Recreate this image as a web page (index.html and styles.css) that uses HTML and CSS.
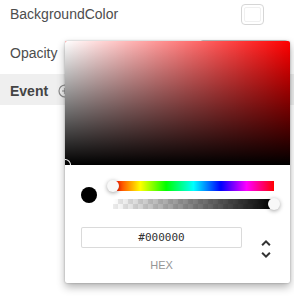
FILE: index.html
```html
<!DOCTYPE html>
<html>
<head>
<meta charset="utf-8">
<link rel="stylesheet" href="styles.css">
</head>
<body>
<div class="panel">
  <div class="row row-bg">
    <span class="label">BackgroundColor</span>
    <span class="swatch"><span class="swatch-inner"></span></span>
  </div>
  <div class="row row-op">
    <span class="label">Opacity</span>
    <span class="op-input"></span>
  </div>
  <div class="row row-event">
    <span class="label bold">Event</span>
    <svg class="add-icon" width="14" height="14" viewBox="0 0 14 14"><circle cx="7" cy="7" r="6" fill="none" stroke="#8a8a8a" stroke-width="1.2"/><path d="M4 7h6M7 4v6" stroke="#8a8a8a" stroke-width="1.2"/></svg>
  </div>

  <div class="picker">
    <div class="sat">
      <div class="sat-white"></div>
      <div class="sat-black"></div>
      <div class="sat-pointer"></div>
    </div>
    <div class="body">
      <div class="controls">
        <div class="color"><div class="dot"></div></div>
        <div class="toggles">
          <div class="hue"><div class="pointer pointer-hue"></div></div>
          <div class="alpha"><div class="alpha-grad"></div><div class="pointer pointer-alpha"></div></div>
        </div>
      </div>
      <div class="fields">
        <div class="field">
          <div class="hex-input">#000000</div>
          <div class="hex-label">HEX</div>
        </div>
        <div class="toggle">
          <svg class="toggle-icon" width="24" height="24" viewBox="0 0 24 24"><path fill="#333" d="M12,18.17L8.830,15L7.42,16.41L12,21L16.59,16.41L15.17,15M12,5.83L15.17,9L16.58,7.59L12,3L7.41,7.59L8.83,9L12,5.83Z"/></svg>
        </div>
      </div>
    </div>
  </div>
</div>
</body>
</html>
```
FILE: styles.css
```css
html, body { margin: 0; padding: 0; background: #fff; }
body { width: 294px; height: 301px; overflow: hidden; font-family: "Liberation Sans", Arial, sans-serif; }
.panel { position: relative; width: 294px; height: 301px; }
.row { display: flex; align-items: flex-start; padding-left: 10px; box-sizing: border-box; }
.label { font-size: 14px; line-height: 16px; color: #4d4d4d; }
.bold { font-weight: bold; color: #444; }
.row-bg { height: 33px; }
.row-bg .label { margin-top: 6px; }
.swatch { margin-left: auto; margin-right: 30px; margin-top: 4px; width: 23px; height: 21px; box-sizing: border-box; border: 1px solid #d6d6d6; border-radius: 4px; padding: 2px; }
.swatch-inner { display: block; width: 100%; height: 100%; box-sizing: border-box; border: 1px solid #f0f0f0; border-radius: 2px; }
.row-op { height: 41px; }
.row-op .label { margin-top: 12px; }
.op-input { margin-left: auto; margin-right: 6px; margin-top: 7px; width: 88px; height: 24px; box-sizing: border-box; border: 1px solid #c8c8c8; border-radius: 3px; }
.row-event { height: 31px; background: #efefef; align-items: center; }
.row-event .label { margin-top: 2px; }
.add-icon { margin-left: 10px; margin-top: 2px; }

.picker { position: absolute; left: 65px; top: 41px; width: 225px; background: #fff; border-radius: 2px; box-shadow: 0 0 2px rgba(0,0,0,.3), 0 4px 8px rgba(0,0,0,.3); }
.sat { position: relative; height: 124px; border-radius: 2px 2px 0 0; overflow: hidden; background: #f00; }
.sat-white { position: absolute; inset: 0; background: linear-gradient(to right, #fff, rgba(255,255,255,0)); }
.sat-black { position: absolute; inset: 0; background: linear-gradient(to top, #000, rgba(0,0,0,0)); }
.sat-pointer { position: absolute; left: -6px; bottom: -6px; width: 12px; height: 12px; border-radius: 6px; box-shadow: inset 0 0 0 1px #fff; }
.body { padding: 16px 16px 12px; }
.controls { display: flex; }
.color { width: 32px; }
.dot { margin-top: 6px; width: 16px; height: 16px; border-radius: 8px; background: #000; box-shadow: inset 0 0 0 1px rgba(0,0,0,.1); }
.toggles { flex: 1; }
.hue { position: relative; height: 10px; margin-bottom: 8px; background: linear-gradient(to right, #f00 0%, #ff0 17%, #0f0 33%, #0ff 50%, #00f 67%, #f0f 83%, #f00 100%); }
.alpha { position: relative; height: 10px; background-color: #fff; background-image: linear-gradient(45deg, rgba(0,0,0,.08) 25%, transparent 25%, transparent 75%, rgba(0,0,0,.08) 75%), linear-gradient(45deg, rgba(0,0,0,.08) 25%, transparent 25%, transparent 75%, rgba(0,0,0,.08) 75%); background-size: 10px 10px; background-position: 0 0, 5px 5px; }
.alpha-grad { position: absolute; inset: 0; background: linear-gradient(to right, rgba(0,0,0,0), #000); }
.pointer { position: absolute; top: -1px; width: 12px; height: 12px; border-radius: 6px; background: #f8f8f8; box-shadow: 0 1px 4px 0 rgba(0,0,0,.37); }
.pointer-hue { left: -6px; }
.pointer-alpha { right: -6px; }
.fields { display: flex; padding-top: 16px; }
.field { flex: 1; }
.hex-input { margin-top: 2px; height: 21px; line-height: 21px; border-radius: 2px; box-shadow: inset 0 0 0 1px #dadada; text-align: center; font-family: "DejaVu Sans Mono", monospace; font-size: 11px; color: #333; }
.hex-label { margin-top: 12px; font-size: 11px; line-height: 11px; color: #969696; text-align: center; text-transform: uppercase; }
.toggle { width: 32px; text-align: right; }
.toggle-icon { display: inline-block; margin-right: -4px; margin-top: 12px; }
```
